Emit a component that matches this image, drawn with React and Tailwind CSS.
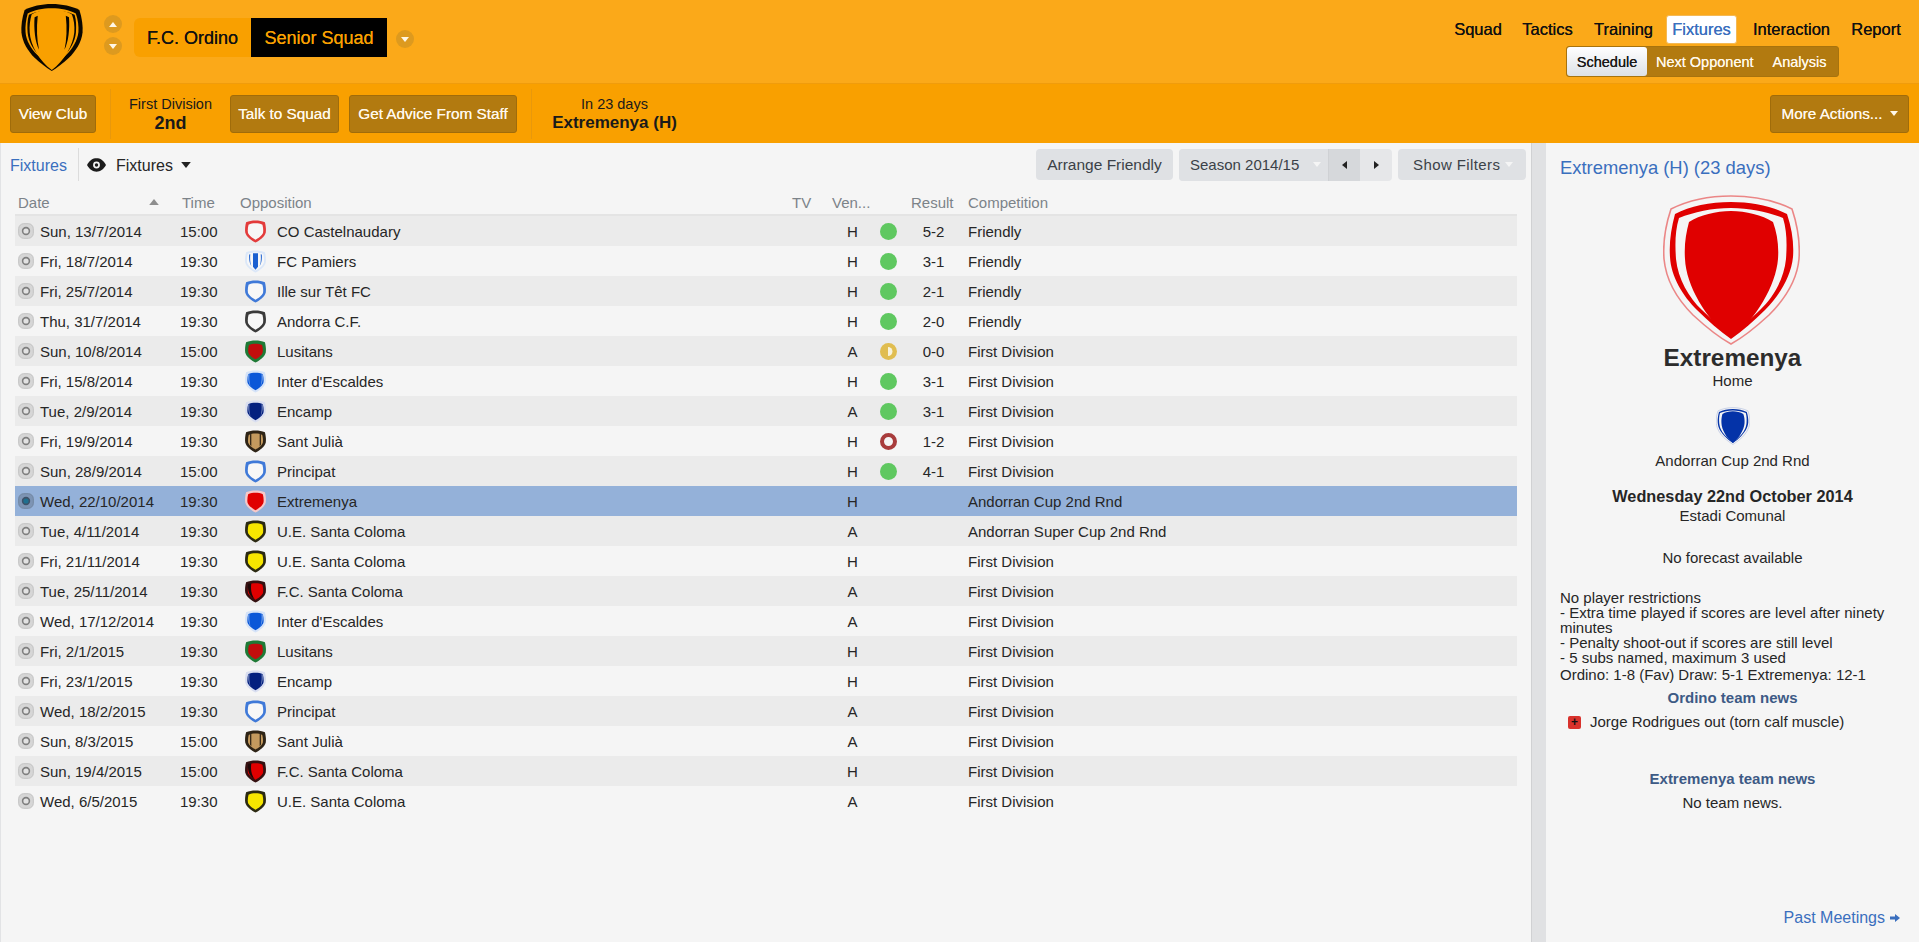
import React from "react";

const SHIELD = "M50 2C66 2 82 5 95 11C100 30 101 48 99 60C95 80 70 98 50 108C30 98 5 80 1 60C-1 48 0 30 5 11C18 5 34 2 50 2Z";

const BADGES = {
  castel: { b: "#e33b3b", f: "#f7f7f7", s: 0.74 },
  pamiers: { b: "#dbe7f8", f: "#f7f7f7", c: "#1a5fd0", stripe: true, s: 0.82 },
  ille: { b: "#3f79d8", f: "#f7f7f7", s: 0.74 },
  andorra: { b: "#3a3a3a", f: "#f7f7f7", s: 0.74 },
  lusitans: { b: "#1f7a36", f: "#c20d0d", s: 0.7 },
  inter: { b: "#d5e3f8", f: "#0a57d8", s: 0.78 },
  encamp: { b: "#d9def0", f: "#04207f", s: 0.78 },
  julia: { b: "#2e2416", f: "#c49a5e", s: 0.72 },
  principat: { b: "#3f79d8", f: "#f7f7f7", s: 0.74 },
  extrem: { b: "#f6c9c9", f: "#e00000", s: 0.78 },
  ue: { b: "#2c2a12", f: "#f7e600", s: 0.74 },
  fc: { b: "#351010", f: "#e00000", s: 0.74 },
};

const ROWS = [
  ["Sun, 13/7/2014", "15:00", "castel", "CO Castelnaudary", "H", "w", "5-2", "Friendly"],
  ["Fri, 18/7/2014", "19:30", "pamiers", "FC Pamiers", "H", "w", "3-1", "Friendly"],
  ["Fri, 25/7/2014", "19:30", "ille", "Ille sur Têt FC", "H", "w", "2-1", "Friendly"],
  ["Thu, 31/7/2014", "19:30", "andorra", "Andorra C.F.", "H", "w", "2-0", "Friendly"],
  ["Sun, 10/8/2014", "15:00", "lusitans", "Lusitans", "A", "d", "0-0", "First Division"],
  ["Fri, 15/8/2014", "19:30", "inter", "Inter d'Escaldes", "H", "w", "3-1", "First Division"],
  ["Tue, 2/9/2014", "19:30", "encamp", "Encamp", "A", "w", "3-1", "First Division"],
  ["Fri, 19/9/2014", "19:30", "julia", "Sant Julià", "H", "l", "1-2", "First Division"],
  ["Sun, 28/9/2014", "15:00", "principat", "Principat", "H", "w", "4-1", "First Division"],
  ["Wed, 22/10/2014", "19:30", "extrem", "Extremenya", "H", "", "", "Andorran Cup 2nd Rnd"],
  ["Tue, 4/11/2014", "19:30", "ue", "U.E. Santa Coloma", "A", "", "", "Andorran Super Cup 2nd Rnd"],
  ["Fri, 21/11/2014", "19:30", "ue", "U.E. Santa Coloma", "H", "", "", "First Division"],
  ["Tue, 25/11/2014", "19:30", "fc", "F.C. Santa Coloma", "A", "", "", "First Division"],
  ["Wed, 17/12/2014", "19:30", "inter", "Inter d'Escaldes", "A", "", "", "First Division"],
  ["Fri, 2/1/2015", "19:30", "lusitans", "Lusitans", "H", "", "", "First Division"],
  ["Fri, 23/1/2015", "19:30", "encamp", "Encamp", "H", "", "", "First Division"],
  ["Wed, 18/2/2015", "19:30", "principat", "Principat", "A", "", "", "First Division"],
  ["Sun, 8/3/2015", "15:00", "julia", "Sant Julià", "A", "", "", "First Division"],
  ["Sun, 19/4/2015", "15:00", "fc", "F.C. Santa Coloma", "H", "", "", "First Division"],
  ["Wed, 6/5/2015", "19:30", "ue", "U.E. Santa Coloma", "A", "", "", "First Division"],
];

function Badge({ id }) {
  const b = BADGES[id];
  return (
    <svg viewBox="0 0 100 110" className="block w-[21px] h-[23px]">
      <path d={SHIELD} fill={b.b} />
      <g transform={`translate(50 55) scale(${b.s}) translate(-50 -55)`}>
        <path d={SHIELD} fill={b.f} />
      </g>
      {b.stripe && (
        <>
          <path d="M38 16H62V80L50 94L38 80Z" fill={b.c} />
          <path d="M20 22L25 20C23 45 25 62 30 76C22 66 18 45 20 22ZM80 22L75 20C77 45 75 62 70 76C78 66 82 45 80 22Z" fill={b.c} />
        </>
      )}
      {id === "fc" && <path d="M14 20L30 16C26 45 30 70 46 92C24 78 12 60 14 20Z" fill="#1c0808" />}
      {id === "julia" && <path d="M24 20L30 18V78L24 70ZM76 20L70 18V78L76 70Z" fill="#2e2416" />}
      {(id === "inter" || id === "encamp") && <path d="M16 22L21 20C19 45 21 62 26 76C18 66 14 45 16 22ZM84 22L79 20C81 45 79 62 74 76C82 66 86 45 84 22Z" fill="#e8eef8" fillOpacity=".6" />}
    </svg>
  );
}

function Radio({ selected }) {
  return (
    <svg viewBox="0 0 16 16" className="block w-4 h-4 shrink-0">
      <rect x=".7" y=".7" width="14.6" height="14.6" rx="5" fill={selected ? "#7d94b4" : "#d6d6d6"} stroke={selected ? "#71859f" : "#c2c2c2"} />
      <circle cx="8" cy="8" r="3.400" fill={selected ? "#1f6f8f" : "#e2e2e2"} stroke={selected ? "#3e5269" : "#7f7f7f"} strokeWidth="1.6" />
    </svg>
  );
}

function Dot({ r }) {
  if (r === "w") return <span className="block w-[17px] h-[17px] rounded-full bg-[#5fc860]" />;
  if (r === "l")
    return <span className="block w-[17px] h-[17px] rounded-full border-[4px] border-[#a83c3c] bg-[#f4f4f4]" />;
  if (r === "d")
    return (
      <svg viewBox="0 0 17 17" className="block w-[17px] h-[17px]">
        <circle cx="8.5" cy="8.5" r="8.500" fill="#e0bd50" />
        <path d="M8 4A4.500 4.500 0 0 1 8 13Z" fill="#f8f3dc" />
      </svg>
    );
  return null;
}

function Tri({ dir = "down", cls = "" }) {
  const d = { down: "M0 0H8L4 5Z", up: "M0 5H8L4 0Z", left: "M5 0V8L0 4Z", right: "M0 0V8L5 4Z" }[dir];
  const vb = dir === "left" || dir === "right" ? "0 0 5 8" : "0 0 8 5";
  const size = dir === "left" || dir === "right" ? "w-[5px] h-[8px]" : "w-[8px] h-[5px]";
  return (
    <svg viewBox={vb} className={`${size} fill-current ${cls}`}>
      <path d={d} />
    </svg>
  );
}

function CircleBtn({ dir }) {
  return (
    <span className="w-[18px] h-[18px] rounded-full bg-[#dd9a1f] flex items-center justify-center text-[#fff7e6]">
      <Tri dir={dir} />
    </span>
  );
}

const P = {
  halo: "M67 1C90 1 112 6 128 14C134 32 136 50 135 64C133 85 120 105 105 120C92 132 78 143 67 149C56 143 42 132 29 120C14 105 2 85 0 64C-1 50 1 32 7 14C23 6 44 1 67 1Z",
  ring: "M67 7C88 7 108 11 123 19C128 34 130 48 129 62C127 82 115 101 101 115C90 126 78 136 67 144C56 136 44 126 33 115C19 101 7 82 6 62C5 48 7 34 11 19C26 11 46 7 67 7Z",
  band: "M67 13C86 13 104 17 119 23C123 36 123 50 122 64C120 84 109 103 96 115C88 123 76 133 67 140C58 133 46 123 38 115C25 103 14 84 12 64C11 50 11 36 15 23C30 17 48 13 67 13Z",
  core: "M67 16C82 16 98 20 109 27C113 38 115 50 114 64C112 90 92 125 67 143C42 125 22 90 21 64C20 50 22 38 25 27C36 20 52 16 67 16Z",
};

function ClubCrest() {
  return (
    <svg viewBox="-1 0 137 150" className="block w-[62px] h-[69px]">
      <path d={P.halo} fill="#0b0700" />
      <g transform="translate(67 75) scale(.95) translate(-67 -75)"><path d={P.ring} fill="#f9a000" /></g>
      <g transform="translate(67 75) scale(.97) translate(-67 -75)"><path d={P.band} fill="#0b0700" /></g>
      <g transform="translate(67 75) scale(1.06) translate(-67 -75)"><path d={P.core} fill="#f9a000" /></g>
      <path d="M29 30L36 27C33 55 34 80 39 102C30 85 27 55 29 30ZM105 30L98 27C101 55 100 80 95 102C104 85 107 55 105 30Z" fill="#0b0700" />
    </svg>
  );
}

function BigCrest({ c, cls }) {
  return (
    <svg viewBox="-1 0 137 150" className={cls}>
      <path d={P.halo} fill="none" stroke={c} strokeOpacity=".45" strokeWidth="1.6" />
      <path d={P.ring} fill={c} />
      <path d={P.band} fill="#f5f5f5" />
      <path d={P.core} fill={c} />
    </svg>
  );
}

const brownBtn =
  "h-[38px] rounded-[3px] bg-[#b27a10] border border-[#a06c0a] text-[#fff8ea] text-[15.3px] flex items-center justify-center [text-shadow:0_0_.4px_currentColor]";

function NavItem({ w, ml, children }) {
  return (
    <span className={`${w} ${ml} text-center whitespace-nowrap`}>{children}</span>
  );
}

export default function App() {
  return (
    <div className="w-[1919px] h-[942px] overflow-hidden flex flex-col bg-[#f5f5f5] text-[15px] text-[#262626] font-['Liberation_Sans',Arial,sans-serif] leading-none">
      {/* top bar */}
      <div className="h-[84px] shrink-0 bg-[#fba919] border-b border-[#f09c0c] flex">
        <div className="ml-[21px] mt-[3px]">
          <ClubCrest />
        </div>
        <div className="ml-[21px] mt-[15px] flex flex-col gap-[4px]">
          <CircleBtn dir="up" />
          <CircleBtn dir="down" />
        </div>
        <div className="ml-[12px] mt-[18px] h-[39px] flex text-[18px] [text-shadow:0_0_.4px_currentColor]">
          <div className="w-[117px] bg-[#f9a000] rounded-l-[6px] flex items-center justify-center text-[#111]">F.C. Ordino</div>
          <div className="w-[136px] bg-black flex items-center justify-center text-[#f9a000]">Senior Squad</div>
        </div>
        <div className="ml-[9px] mt-[30px]">
          <CircleBtn dir="down" />
        </div>
        <div className="ml-auto mr-[18px] mt-[15px] flex flex-col items-end">
          <div className="flex items-center h-[29px] text-[16.5px] text-[#111] [text-shadow:0_0_.4px_currentColor]">
            <NavItem w="w-[48px]" ml="ml-0">Squad</NavItem>
            <NavItem w="w-[51px]" ml="ml-[20px]">Tactics</NavItem>
            <NavItem w="w-[58px]" ml="ml-[21px]">Training</NavItem>
            <span className="ml-[14px] w-[71px] h-[29px] bg-white rounded-[3px] border border-[#f4b955] flex items-center justify-center text-[#3a6fbe]">Fixtures</span>
            <NavItem w="w-[77px]" ml="ml-[16px]">Interaction</NavItem>
            <NavItem w="w-[50px]" ml="ml-[21px]">Report</NavItem>
          </div>
          <div className="mt-[2px] mr-[62px] w-[273px] h-[31px] bg-[#b27a10] rounded-[3px] border border-[#a8730d] flex items-center text-[14.5px] text-[#fff8ea] [text-shadow:0_0_.4px_currentColor]">
            <span className="w-[80px] h-[29px] pt-[1px] rounded-[3px] bg-gradient-to-b from-white to-[#dde1e6] text-[#1a1a1a] flex items-center justify-center">Schedule</span>
            <span className="ml-[9px] pt-[1px]">Next Opponent</span>
            <span className="ml-[19px] pt-[1px]">Analysis</span>
          </div>
        </div>
      </div>

      {/* action bar */}
      <div className="h-[59px] shrink-0 bg-[#f9a000] flex items-center">
        <button className={`${brownBtn} ml-[10px] w-[86px]`}>View Club</button>
        <div className="ml-[14px] w-px h-[50px] bg-[#e8980c]" />
        <div className="w-[119px] flex flex-col items-center text-[#1a1a1a]">
          <span className="text-[14.5px] leading-[18px]">First Division</span>
          <span className="text-[18px] leading-[20px] font-bold">2nd</span>
        </div>
        <button className={`${brownBtn} w-[109px]`}>Talk to Squad</button>
        <button className={`${brownBtn} ml-[10px] w-[168px]`}>Get Advice From Staff</button>
        <div className="ml-[14px] w-px h-[50px] bg-[#e8980c]" />
        <div className="ml-[21px] w-[123px] flex flex-col items-center text-[#1a1a1a] whitespace-nowrap">
          <span className="text-[14.5px] leading-[18px]">In 23 days</span>
          <span className="text-[17px] leading-[20px] font-bold">Extremenya (H)</span>
        </div>
        <button className={`${brownBtn} ml-auto mr-[10px] w-[139px] gap-[7px]`}>
          More Actions...
          <Tri />
        </button>
      </div>

      {/* body */}
      <div className="flex-1 flex min-h-0">
        {/* list */}
        <div className="w-[1531px] shrink-0 border-l border-[#e2e3e5] flex flex-col">
          <div className="h-[43px] shrink-0 flex items-center">
            <span className="ml-[9px] pt-[2px] w-[58px] text-[16px] whitespace-nowrap text-[#3a6fbe]">Fixtures</span>
            <span className="ml-[10px] w-px h-[33px] bg-[#dcdcdc]" />
            <svg viewBox="0 0 20 14" className="ml-[8px] w-[19px] h-[14px]">
              <path d="M0 7C3 2 6 0 10 0S17 2 20 7C17 12 14 14 10 14S3 12 0 7Z" fill="#1c1c1c" />
              <circle cx="10" cy="7" r="3.600" fill="#f5f5f5" />
              <circle cx="10" cy="7" r="1.800" fill="#1c1c1c" />
            </svg>
            <span className="ml-[10px] pt-[2px] w-[57px] text-[16px] whitespace-nowrap">Fixtures</span>
            <Tri cls="ml-[8px] w-[10px] h-[6px] text-[#222]" />
            <div className="ml-auto mr-[5px] flex items-center text-[#3b4148]">
              <span className="w-[137px] h-[31px] rounded-[4px] bg-[#dfe1e4] flex items-center justify-center text-[15.5px]">Arrange Friendly</span>
              <div className="ml-[6px] w-[213px] h-[32px] rounded-[4px] bg-[#e6e7e9] flex overflow-hidden">
                <span className="w-[149px] bg-[#dfe1e4] flex items-center pl-[11px] gap-[14px] whitespace-nowrap">
                  Season 2014/15
                  <Tri cls="text-[#f5f5f5]" />
                </span>
                <span className="w-[32px] bg-[#d6d8db] border-l border-[#cfd1d4] flex items-center justify-center text-[#222]"><Tri dir="left" /></span>
                <span className="w-[32px] flex items-center justify-center text-[#222]"><Tri dir="right" /></span>
              </div>
              <span className="ml-[6px] w-[128px] h-[31px] rounded-[4px] bg-[#dfe1e4] flex items-center pl-[15px] gap-[5px] tracking-[.4px]">
                Show Filters
                <Tri cls="text-[#f5f5f5]" />
              </span>
            </div>
          </div>

          <div className="ml-[14px] w-[1502px] h-[30px] shrink-0 border-b-2 border-[#e4e4e4] flex items-center pt-[4px] text-[#7c8389]">
            <span className="ml-[3px] w-[131px]">Date</span>
            <Tri dir="up" cls="w-[10px] h-[6px] text-[#8e8e8e]" />
            <span className="ml-[23px] w-[58px]">Time</span>
            <span className="w-[552px]">Opposition</span>
            <span className="w-[40px]">TV</span>
            <span className="w-[79px]">Ven...</span>
            <span className="w-[57px]">Result</span>
            <span>Competition</span>
          </div>

          {ROWS.map((r, i) => (
            <div
              key={i}
              className={`ml-[14px] w-[1502px] h-[30px] shrink-0 flex items-center ${
                i === 9 ? "bg-[#94b1d9]" : i % 2 === 0 ? "bg-[#ebebeb]" : "bg-[#f5f5f5]"
              }`}
            >
              <span className="ml-[3px]"><Radio selected={i === 9} /></span>
              <span className="ml-[6px] w-[140px]">{r[0]}</span>
              <span className="w-[65px]">{r[1]}</span>
              <span className="w-[32px]"><Badge id={r[2]} /></span>
              <span className="w-[563px]">{r[3]}</span>
              <span className="w-[25px] text-center">{r[4]}</span>
              <span className="ml-[15px] w-[17px]"><Dot r={r[5]} /></span>
              <span className="ml-[14px] w-[45px] text-center">{r[6]}</span>
              <span className="ml-[12px]">{r[7]}</span>
            </div>
          ))}
        </div>

        {/* splitter */}
        <div className="w-[15px] shrink-0 bg-[#e0e1e3] border-l border-[#d0d1d3]" />

        {/* side panel */}
        <div className="flex-1 px-[14px] flex flex-col items-center">
          <div className="self-start mt-[16px] text-[18.4px] leading-[18px] whitespace-nowrap text-[#3a6fbe]">Extremenya (H) (23 days)</div>
          <BigCrest c="#e00000" cls="mt-[18px] w-[137px] h-[150px] -translate-x-[1px]" />
          <div className="-mt-[1px] text-[24.3px] leading-[28px] font-bold text-[#2c2c2c]">Extremenya</div>
          <div className="leading-[18px]">Home</div>
          <BigCrest c="#0433a8" cls="mt-[17px] w-[34px] h-[38px]" />
          <div className="mt-[7px] leading-[18px]">Andorran Cup 2nd Rnd</div>
          <div className="mt-[16px] text-[16.3px] leading-[21px] font-bold whitespace-nowrap">Wednesday 22nd October 2014</div>
          <div className="leading-[18px]">Estadi Comunal</div>
          <div className="mt-[24px] leading-[18px]">No forecast available</div>
          <div className="mt-[23px] self-stretch leading-[15px]">
            No player restrictions<br />
            - Extra time played if scores are level after ninety minutes<br />
            - Penalty shoot-out if scores are still level<br />
            - 5 subs named, maximum 3 used<br />
            <span className="block mt-[2px]">Ordino: 1-8 (Fav) Draw: 5-1 Extremenya: 12-1</span>
          </div>
          <div className="mt-[7px] leading-[18px] font-bold text-[#3d5a85]">Ordino team news</div>
          <div className="mt-[6px] self-stretch flex items-center leading-[18px]">
            <span className="ml-[8px] w-[13px] h-[13px] rounded-[2px] bg-[#d8322c] flex items-center justify-center text-[#111] text-[12px] font-bold">+</span>
            <span className="ml-[9px]">Jorge Rodrigues out (torn calf muscle)</span>
          </div>
          <div className="mt-[39px] leading-[18px] font-bold text-[#3d5a85]">Extremenya team news</div>
          <div className="mt-[6px] leading-[18px]">No team news.</div>
          <div className="mt-auto mb-[15px] self-end flex items-center gap-[5px] text-[16px] text-[#3a6fbe] mr-[5px]">
            <span className="leading-[18px]">Past Meetings</span>
            <svg viewBox="0 0 10 8" className="w-[10px] h-[8px] fill-current"><path d="M0 2.500H5V0L10 4L5 8V5.500H0Z" /></svg>
          </div>
        </div>
      </div>
    </div>
  );
}
